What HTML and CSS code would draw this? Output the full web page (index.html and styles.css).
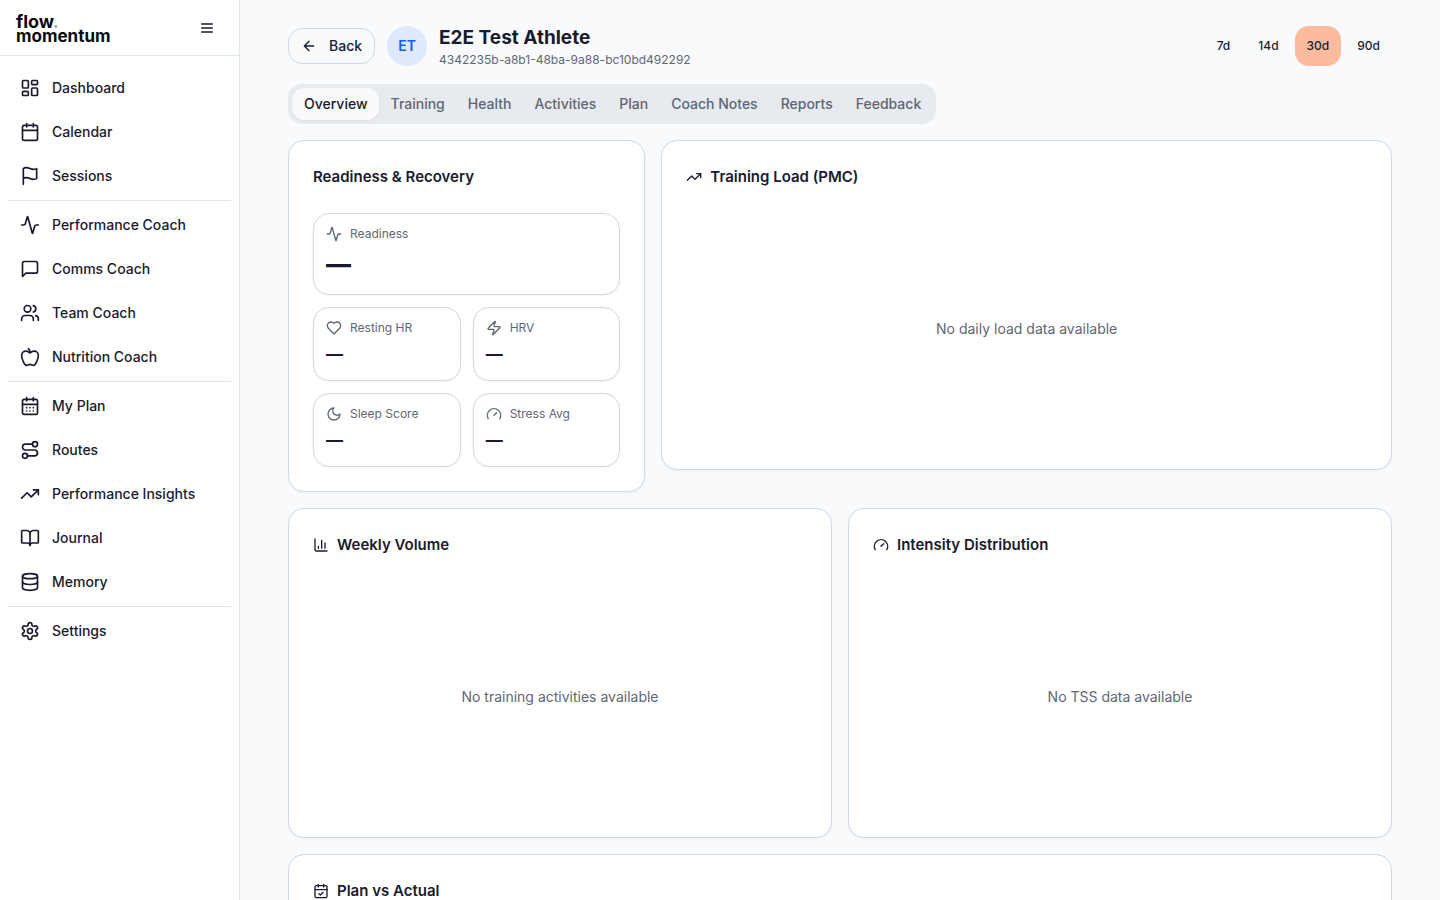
FILE: index.html
```html
<!DOCTYPE html>
<html lang="en">
<head>
<meta charset="utf-8">
<meta name="viewport" content="width=device-width, initial-scale=1">
<title>E2E Test Athlete</title>
<link rel="stylesheet" href="styles.css">
</head>
<body>
<svg class="sprite" aria-hidden="true">
  <symbol id="dashboard" viewBox="0 0 24 24"><rect width="7" height="9" x="3" y="3" rx="1"/><rect width="7" height="5" x="14" y="3" rx="1"/><rect width="7" height="9" x="14" y="12" rx="1"/><rect width="7" height="5" x="3" y="16" rx="1"/></symbol>
  <symbol id="calendar" viewBox="0 0 24 24"><path d="M8 2v4M16 2v4M3 10h18"/><rect width="18" height="18" x="3" y="4" rx="2"/></symbol>
  <symbol id="flag" viewBox="0 0 24 24"><path d="M4 15s1-1 4-1 5 2 8 2 4-1 4-1V3s-1 1-4 1-5-2-8-2-4 1-4 1zM4 22v-7"/></symbol>
  <symbol id="activity" viewBox="0 0 24 24"><path d="M22 12h-2.48a2 2 0 0 0-1.93 1.46l-2.35 8.36a.25.25 0 0 1-.48 0L9.24 2.18a.25.25 0 0 0-.48 0l-2.35 8.36A2 2 0 0 1 4.49 12H2"/></symbol>
  <symbol id="message" viewBox="0 0 24 24"><path d="M21 15a2 2 0 0 1-2 2H7l-4 4V5a2 2 0 0 1 2-2h14a2 2 0 0 1 2 2z"/></symbol>
  <symbol id="users" viewBox="0 0 24 24"><path d="M16 21v-2a4 4 0 0 0-4-4H6a4 4 0 0 0-4 4v2"/><circle cx="9" cy="7" r="4"/><path d="M22 21v-2a4 4 0 0 0-3-3.870M16 3.130a4 4 0 0 1 0 7.750"/></symbol>
  <symbol id="apple" viewBox="0 0 24 24"><path d="M12 20.94c1.5 0 2.75 1.06 4 1.06 3 0 6-8 6-12.22A4.91 4.91 0 0 0 17 5c-2.22 0-4 1.44-5 2-1-.56-2.78-2-5-2a4.9 4.9 0 0 0-5 4.78C2 14 5 22 8 22c1.25 0 2.5-1.06 4-1.06Z"/><path d="M10 2c1 .5 2 2 2 5"/></symbol>
  <symbol id="calendar-days" viewBox="0 0 24 24"><path d="M8 2v4M16 2v4M3 10h18M8 14h.01M12 14h.01M16 14h.01M8 18h.01M12 18h.01M16 18h.01"/><rect width="18" height="18" x="3" y="4" rx="2"/></symbol>
  <symbol id="route" viewBox="0 0 24 24"><circle cx="6" cy="19" r="3"/><path d="M9 19h8.500a3.500 3.500 0 0 0 0-7h-11a3.500 3.500 0 0 1 0-7H15"/><circle cx="18" cy="5" r="3"/></symbol>
  <symbol id="trending" viewBox="0 0 24 24"><path d="m22 7-8.500 8.500-5-5L2 17"/><path d="M16 7h6v6"/></symbol>
  <symbol id="book" viewBox="0 0 24 24"><path d="M12 7v14"/><path d="M3 18a1 1 0 0 1-1-1V4a1 1 0 0 1 1-1h5a4 4 0 0 1 4 4 4 4 0 0 1 4-4h5a1 1 0 0 1 1 1v13a1 1 0 0 1-1 1h-6a3 3 0 0 0-3 3 3 3 0 0 0-3-3z"/></symbol>
  <symbol id="database" viewBox="0 0 24 24"><ellipse cx="12" cy="5" rx="9" ry="3"/><path d="M3 5v14a9 3 0 0 0 18 0V5"/><path d="M3 12a9 3 0 0 0 18 0"/></symbol>
  <symbol id="settings" viewBox="0 0 24 24"><path d="M12.220 2h-.440a2 2 0 0 0-2 2v.180a2 2 0 0 1-1 1.730l-.430.250a2 2 0 0 1-2 0l-.150-.080a2 2 0 0 0-2.730.730l-.220.380a2 2 0 0 0 .730 2.730l.150.100a2 2 0 0 1 1 1.720v.510a2 2 0 0 1-1 1.740l-.150.090a2 2 0 0 0-.730 2.730l.220.380a2 2 0 0 0 2.730.730l.150-.080a2 2 0 0 1 2 0l.430.250a2 2 0 0 1 1 1.730V20a2 2 0 0 0 2 2h.440a2 2 0 0 0 2-2v-.180a2 2 0 0 1 1-1.730l.430-.250a2 2 0 0 1 2 0l.150.080a2 2 0 0 0 2.730-.730l.220-.390a2 2 0 0 0-.730-2.730l-.150-.080a2 2 0 0 1-1-1.740v-.500a2 2 0 0 1 1-1.740l.150-.090a2 2 0 0 0 .730-2.730l-.220-.380a2 2 0 0 0-2.730-.730l-.150.080a2 2 0 0 1-2 0l-.430-.250a2 2 0 0 1-1-1.730V4a2 2 0 0 0-2-2z"/><circle cx="12" cy="12" r="3"/></symbol>
  <symbol id="menu" viewBox="0 0 24 24"><path d="M4 6h16M4 12h16M4 18h16"/></symbol>
  <symbol id="arrow-left" viewBox="0 0 24 24"><path d="m12 19-7-7 7-7M19 12H5"/></symbol>
  <symbol id="heart" viewBox="0 0 24 24"><path d="M19 14c1.490-1.460 3-3.210 3-5.500A5.500 5.500 0 0 0 16.500 3c-1.760 0-3 .5-4.500 2-1.500-1.500-2.740-2-4.500-2A5.500 5.500 0 0 0 2 8.500c0 2.300 1.500 4.050 3 5.500l7 7Z"/></symbol>
  <symbol id="zap" viewBox="0 0 24 24"><path d="M4 14a1 1 0 0 1-.78-1.630l9.900-10.200a.5.5 0 0 1 .86.460l-1.920 6.020A1 1 0 0 0 13 10h7a1 1 0 0 1 .78 1.630l-9.900 10.200a.5.5 0 0 1-.86-.460l1.920-6.020A1 1 0 0 0 11 14z"/></symbol>
  <symbol id="moon" viewBox="0 0 24 24"><path d="M12 3a6 6 0 0 0 9 9 9 9 0 1 1-9-9Z"/></symbol>
  <symbol id="gauge" viewBox="0 0 24 24"><path d="m12 14 4-4M3.340 19a10 10 0 1 1 17.320 0"/></symbol>
  <symbol id="chart" viewBox="0 0 24 24"><path d="M3 3v16a2 2 0 0 0 2 2h16M18 17V9M13 17V5M8 17v-3"/></symbol>
  <symbol id="calendar-check" viewBox="0 0 24 24"><path d="M8 2v4M16 2v4M3 10h18M9 16l2 2 4-4"/><rect width="18" height="18" x="3" y="4" rx="2"/></symbol>
</svg>

<div class="app">
  <aside class="sidebar">
    <div class="brand-bar">
      <a class="brand" href="#"><span class="brand-top">flow<span class="brand-dot">.</span></span><span>momentum</span></a>
      <button class="menu-button" type="button" aria-label="Toggle menu"><svg class="icon icon-sm"><use href="#menu"/></svg></button>
    </div>
    <nav class="nav">
      <a class="nav-link" href="#"><svg class="icon"><use href="#dashboard"/></svg>Dashboard</a>
      <a class="nav-link" href="#"><svg class="icon"><use href="#calendar"/></svg>Calendar</a>
      <a class="nav-link" href="#"><svg class="icon"><use href="#flag"/></svg>Sessions</a>
      <hr class="nav-divider">
      <a class="nav-link" href="#"><svg class="icon"><use href="#activity"/></svg>Performance Coach</a>
      <a class="nav-link" href="#"><svg class="icon"><use href="#message"/></svg>Comms Coach</a>
      <a class="nav-link" href="#"><svg class="icon"><use href="#users"/></svg>Team Coach</a>
      <a class="nav-link" href="#"><svg class="icon"><use href="#apple"/></svg>Nutrition Coach</a>
      <hr class="nav-divider">
      <a class="nav-link" href="#"><svg class="icon"><use href="#calendar-days"/></svg>My Plan</a>
      <a class="nav-link" href="#"><svg class="icon"><use href="#route"/></svg>Routes</a>
      <a class="nav-link" href="#"><svg class="icon"><use href="#trending"/></svg>Performance Insights</a>
      <a class="nav-link" href="#"><svg class="icon"><use href="#book"/></svg>Journal</a>
      <a class="nav-link" href="#"><svg class="icon"><use href="#database"/></svg>Memory</a>
      <hr class="nav-divider">
      <a class="nav-link" href="#"><svg class="icon"><use href="#settings"/></svg>Settings</a>
    </nav>
  </aside>

  <main class="main">
    <header class="page-header">
      <button class="back-button" type="button"><svg class="icon icon-sm"><use href="#arrow-left"/></svg>Back</button>
      <div class="avatar">ET</div>
      <div class="athlete">
        <h1 class="athlete-name">E2E Test Athlete</h1>
        <p class="athlete-id">4342235b-a8b1-48ba-9a88-bc10bd492292</p>
      </div>
      <div class="ranges">
        <button class="range" type="button">7d</button>
        <button class="range" type="button">14d</button>
        <button class="range range-active" type="button">30d</button>
        <button class="range" type="button">90d</button>
      </div>
    </header>

    <div class="tabs" role="tablist">
      <button class="tab tab-active" type="button" role="tab" aria-selected="true">Overview</button>
      <button class="tab" type="button" role="tab">Training</button>
      <button class="tab" type="button" role="tab">Health</button>
      <button class="tab" type="button" role="tab">Activities</button>
      <button class="tab" type="button" role="tab">Plan</button>
      <button class="tab" type="button" role="tab">Coach Notes</button>
      <button class="tab" type="button" role="tab">Reports</button>
      <button class="tab" type="button" role="tab">Feedback</button>
    </div>

    <div class="row row-thirds">
      <section class="card">
        <h2 class="card-title">Readiness &amp; Recovery</h2>
        <div class="tiles">
          <div class="tile tile-wide">
            <div class="tile-label"><svg class="icon icon-sm"><use href="#activity"/></svg>Readiness</div>
            <div class="tile-value tile-value-lg">—</div>
          </div>
          <div class="tile">
            <div class="tile-label"><svg class="icon icon-sm"><use href="#heart"/></svg>Resting HR</div>
            <div class="tile-value">—</div>
          </div>
          <div class="tile">
            <div class="tile-label"><svg class="icon icon-sm"><use href="#zap"/></svg>HRV</div>
            <div class="tile-value">—</div>
          </div>
          <div class="tile">
            <div class="tile-label"><svg class="icon icon-sm"><use href="#moon"/></svg>Sleep Score</div>
            <div class="tile-value">—</div>
          </div>
          <div class="tile">
            <div class="tile-label"><svg class="icon icon-sm"><use href="#gauge"/></svg>Stress Avg</div>
            <div class="tile-value">—</div>
          </div>
        </div>
      </section>
      <section class="card card-double">
        <h2 class="card-title"><svg class="icon icon-sm"><use href="#trending"/></svg>Training Load (PMC)</h2>
        <p class="empty">No daily load data available</p>
      </section>
    </div>

    <div class="row row-halves">
      <section class="card">
        <h2 class="card-title"><svg class="icon icon-sm"><use href="#chart"/></svg>Weekly Volume</h2>
        <p class="empty">No training activities available</p>
      </section>
      <section class="card">
        <h2 class="card-title"><svg class="icon icon-sm"><use href="#gauge"/></svg>Intensity Distribution</h2>
        <p class="empty">No TSS data available</p>
      </section>
    </div>

    <section class="card">
      <h2 class="card-title"><svg class="icon icon-sm"><use href="#calendar-check"/></svg>Plan vs Actual</h2>
    </section>
  </main>
</div>
</body>
</html>
```

FILE: styles.css
```css
:root {
  --ink: #1a1a2e;
  --muted: #5f6673;
  --line: #dde5ee;
  --card-line: #cdd9e5;
  --page: #f9fafc;
}

* {
  box-sizing: border-box;
  margin: 0;
}

body {
  background: var(--page);
  color: var(--ink);
  font-family: Inter, "Liberation Sans", sans-serif;
  font-size: 14px;
  line-height: 20px;
  -webkit-font-smoothing: antialiased;
}

button {
  border: 0;
  background: none;
  color: inherit;
  font: inherit;
  cursor: pointer;
}

a {
  color: inherit;
  text-decoration: none;
}

.sprite {
  display: none;
}

.icon {
  flex: none;
  width: 20px;
  height: 20px;
  fill: none;
  stroke: currentColor;
  stroke-width: 2;
  stroke-linecap: round;
  stroke-linejoin: round;
}

.icon-sm {
  width: 16px;
  height: 16px;
}

.app {
  display: flex;
  height: 100vh;
}

.sidebar {
  flex: none;
  width: 240px;
  background: #fff;
  border-right: 1px solid var(--line);
}

.brand-bar {
  display: flex;
  align-items: center;
  justify-content: space-between;
  height: 56px;
  padding: 0 16px;
  border-bottom: 1px solid var(--line);
}

.brand {
  display: flex;
  flex-direction: column;
  padding-top: 2px;
  color: #0a0a0a;
  font-size: 17px;
  font-weight: 700;
  line-height: 15px;
}

.brand-top {
  font-size: 18px;
}

.brand-dot {
  color: #aaa;
}

.menu-button {
  display: flex;
  padding: 8px;
}

.nav {
  display: flex;
  flex-direction: column;
  gap: 4px;
  padding: 12px 8px;
}

.nav-link {
  display: flex;
  align-items: center;
  gap: 12px;
  height: 40px;
  padding: 0 12px;
  font-weight: 500;
}

.nav-divider {
  border: 0;
  border-top: 1px solid var(--line);
}

.main {
  display: flex;
  flex: 1;
  flex-direction: column;
  gap: 16px;
  min-width: 0;
  padding: 24px 48px;
  overflow-y: auto;
  scrollbar-width: none;
}

.main > * {
  flex: none;
}

.page-header {
  display: flex;
  align-items: center;
  gap: 12px;
}

.back-button {
  display: flex;
  align-items: center;
  gap: 12px;
  height: 36px;
  padding: 0 12px;
  border: 1px solid var(--card-line);
  border-radius: 14px;
  font-weight: 500;
}

.avatar {
  display: grid;
  place-items: center;
  width: 40px;
  height: 40px;
  border-radius: 50%;
  background: #dfe9fb;
  color: #0f5bff;
  font-weight: 600;
}

.athlete-name {
  font-size: 19px;
  font-weight: 700;
  line-height: 28px;
}

.athlete-id {
  color: var(--muted);
  font-size: 12px;
  line-height: 16px;
}

.ranges {
  display: flex;
  gap: 4px;
  margin-left: auto;
}

.range {
  height: 40px;
  padding: 0 12px;
  border-radius: 14px;
  font-size: 12px;
  font-weight: 500;
}

.range-active {
  background: #fcba9f;
}

.tabs {
  display: flex;
  align-self: flex-start;
  padding: 4px;
  border-radius: 14px;
  background: #e7eaef;
}

.tab {
  height: 32px;
  padding: 0 11px 0 12px;
  border-radius: 12px;
  color: var(--muted);
  font-weight: 500;
}

.tab-active {
  background: var(--page);
  color: var(--ink);
  box-shadow: 0 1px 2px rgb(0 0 0 / 6%);
}

.row {
  display: grid;
  align-items: start;
  gap: 16px;
}

.row-thirds {
  grid-template-columns: repeat(3, minmax(0, 1fr));
}

.row-halves {
  grid-template-columns: repeat(2, minmax(0, 1fr));
}

.card {
  padding: 24px;
  border: 1px solid var(--card-line);
  border-radius: 16px;
  background: #fff;
  box-shadow: 0 1px 2px rgb(0 0 0 / 5%);
}

.card-double {
  grid-column: span 2;
}

.card-title {
  display: flex;
  align-items: center;
  gap: 8px;
  margin-bottom: 24px;
  font-size: 15px;
  font-weight: 600;
  line-height: 24px;
}

.empty {
  display: grid;
  place-items: center;
  min-height: 232px;
  color: var(--muted);
}

.tiles {
  display: grid;
  grid-template-columns: repeat(2, minmax(0, 1fr));
  gap: 12px;
}

.tile {
  padding: 12px;
  border: 1px solid var(--card-line);
  border-radius: 16px;
  box-shadow: 0 1px 2px rgb(0 0 0 / 5%);
}

.tile-wide {
  grid-column: span 2;
}

.tile-label {
  display: flex;
  align-items: center;
  gap: 8px;
  margin-bottom: 4px;
  color: var(--muted);
  font-size: 12px;
  line-height: 16px;
}

.tile-value {
  font-size: 17px;
  font-weight: 700;
  line-height: 28px;
}

.tile-value-lg {
  font-size: 25px;
  font-weight: 800;
  line-height: 36px;
}
```
